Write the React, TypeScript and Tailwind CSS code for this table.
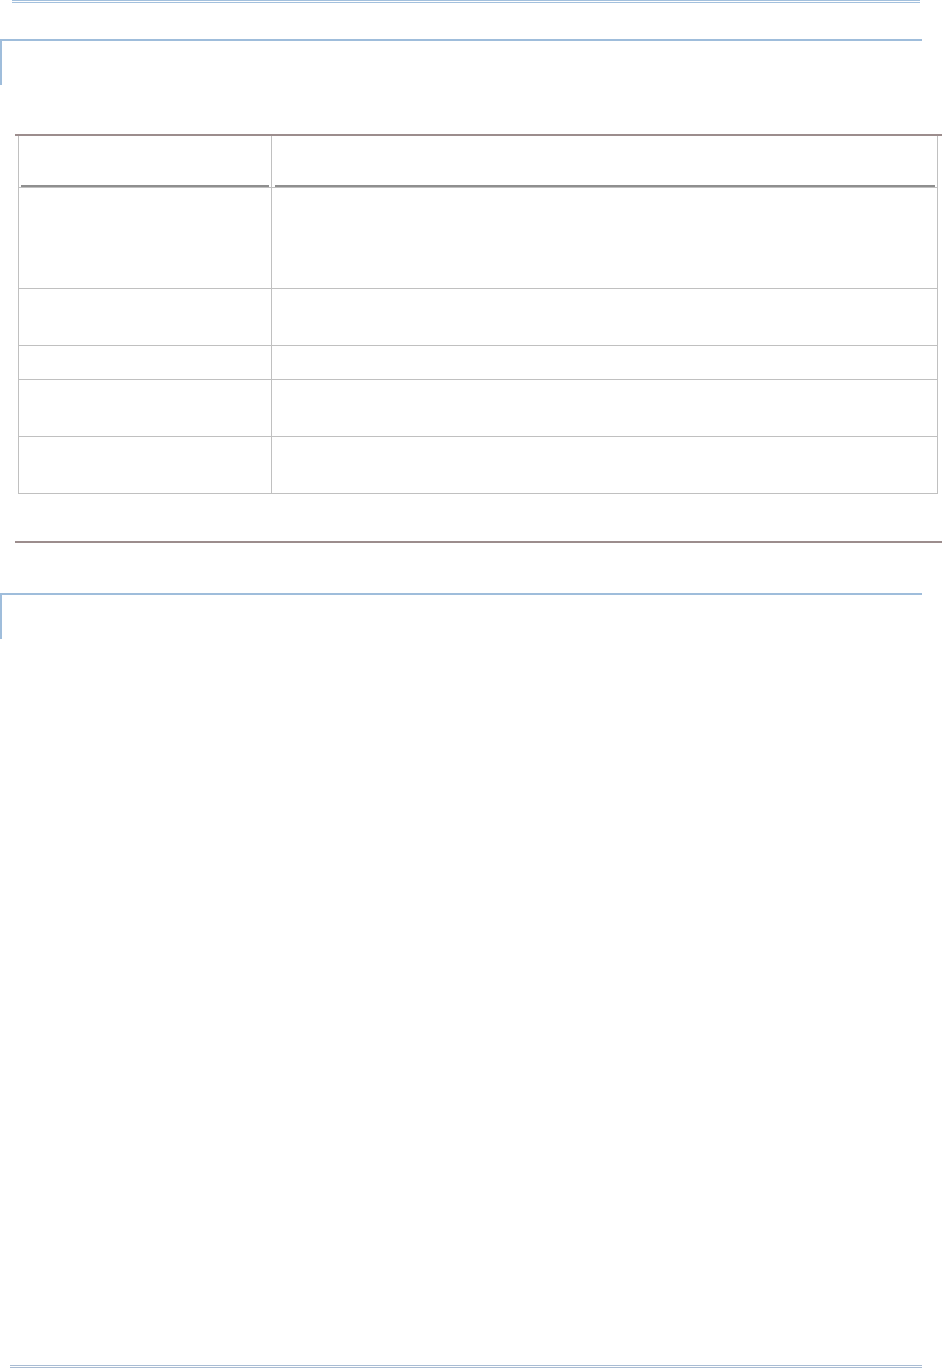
const rows = [101, 57, 34, 57, 57];

function Box() {
  return <div className="w-[922px] h-[46px] border-t-2 border-l-2 border-[#9fbddb]" />;
}

function Rule() {
  return <div className="ml-[15px] border-t-2 border-[#9c8d8d]" />;
}

export default function App() {
  return (
    <div className="min-h-[1368px] flex flex-col bg-white">
      <div className="ml-[12px] w-[908px] h-[3px] border-y border-[#a3c0dd]" />
      <div className="mt-[36px]">
        <Box />
      </div>

      <div className="mt-[49px]">
        <Rule />
      </div>
      <div className="ml-[18px] w-[920px] border-x border-[#c0c0c0]">
        <div className="grid grid-cols-[253px_1fr] h-[52px] border-b border-[#c0c0c0]">
          <div className="border-r border-[#c0c0c0] flex flex-col justify-end">
            <div className="mx-[2px] border-t-2 border-[#8f8f8f]" />
          </div>
          <div className="flex flex-col justify-end">
            <div className="ml-[3px] mr-[2px] border-t-2 border-[#8f8f8f]" />
          </div>
        </div>
        {rows.map((h, i) => (
          <div
            key={i}
            className="grid grid-cols-[253px_1fr] border-b border-[#c0c0c0]"
            style={{ height: h }}
          >
            <div className="border-r border-[#c0c0c0]" />
            <div />
          </div>
        ))}
      </div>

      <div className="mt-[47px]">
        <Rule />
      </div>
      <div className="mt-[50px]">
        <Box />
      </div>

      <div className="mt-auto ml-[10px] w-[912px] h-[3px] border-y border-[#a9bcd3]" />
    </div>
  );
}
